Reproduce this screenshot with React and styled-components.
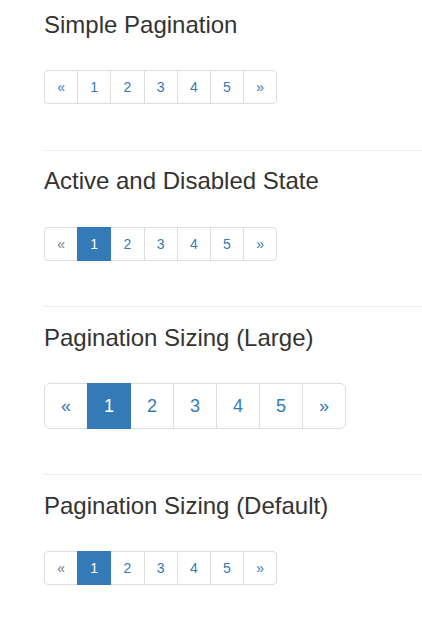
import React from 'react'
import styled, { createGlobalStyle } from 'styled-components'

const GlobalStyle = createGlobalStyle`
  * { box-sizing: border-box; }
  body {
    margin: 0;
    background: #fff;
    font-family: "Liberation Sans", Arial, Helvetica, sans-serif;
    font-size: 14px;
    line-height: 1.42857;
    color: #333;
  }
`

const Page = styled.div`
  padding: 12px 0 0 44px;
  overflow: hidden;
`

const Section = styled.section`
  display: flex;
  flex-direction: column;
  align-items: flex-start;
`

const Title = styled.h3`
  margin: 0 0 32px;
  font-size: 24px;
  font-weight: 500;
  line-height: 26.4px;
  color: #333;
`

const Divider = styled.hr`
  width: 100%;
  margin: 45.3px 0 17.6px;
  border: 0;
  border-top: 1px solid #eee;
`

const Pager = styled.ul`
  display: flex;
  margin: 0;
  padding: 0;
  list-style: none;
`

const Item = styled.li`
  display: flex;
  margin-left: -1px;
  &:first-child { margin-left: 0; }
  &:first-child a {
    border-top-left-radius: ${(p) => (p.$large ? '6px' : '4px')};
    border-bottom-left-radius: ${(p) => (p.$large ? '6px' : '4px')};
  }
  &:last-child a {
    border-top-right-radius: ${(p) => (p.$large ? '6px' : '4px')};
    border-bottom-right-radius: ${(p) => (p.$large ? '6px' : '4px')};
  }
`

const PageLink = styled.a`
  display: block;
  padding: ${(p) => (p.$large ? '10px 16px' : '6px 12.2px')};
  font-size: ${(p) => (p.$large ? '18px' : '14px')};
  line-height: ${(p) => (p.$large ? '24px' : '20px')};
  text-decoration: none;
  border: 1px solid ${(p) => (p.$active ? '#337ab7' : '#ddd')};
  background: ${(p) => (p.$active ? '#337ab7' : '#fff')};
  color: ${(p) => (p.$active ? '#fff' : p.$disabled ? '#777' : '#337ab7')};
  cursor: ${(p) => (p.$disabled ? 'not-allowed' : 'pointer')};
  position: relative;
  z-index: ${(p) => (p.$active ? 2 : 'auto')};
`

const pages = ['1', '2', '3', '4', '5']

const Pagination = ({ large, active, prevDisabled }) => {
  const items = [
    { label: '\u00ab', disabled: prevDisabled },
    ...pages.map((n) => ({ label: n, active: n === active })),
    { label: '\u00bb' },
  ]
  return (
    <Pager>
      {items.map((it, i) => (
        <Item key={i} $large={large}>
          <PageLink href="#" $large={large} $active={it.active} $disabled={it.disabled}>
            {it.label}
          </PageLink>
        </Item>
      ))}
    </Pager>
  )
}

const sections = [
  { title: 'Simple Pagination' },
  { title: 'Active and Disabled State', active: '1', prevDisabled: true },
  { title: 'Pagination Sizing (Large)', active: '1', large: true },
  { title: 'Pagination Sizing (Default)', active: '1', prevDisabled: true },
]

const App = () => (
  <>
    <GlobalStyle />
    <Page>
      {sections.map((s, i) => (
        <Section key={s.title}>
          <Title>{s.title}</Title>
          <Pagination large={s.large} active={s.active} prevDisabled={s.prevDisabled} />
          {i < sections.length - 1 && <Divider />}
        </Section>
      ))}
    </Page>
  </>
)

export default App
